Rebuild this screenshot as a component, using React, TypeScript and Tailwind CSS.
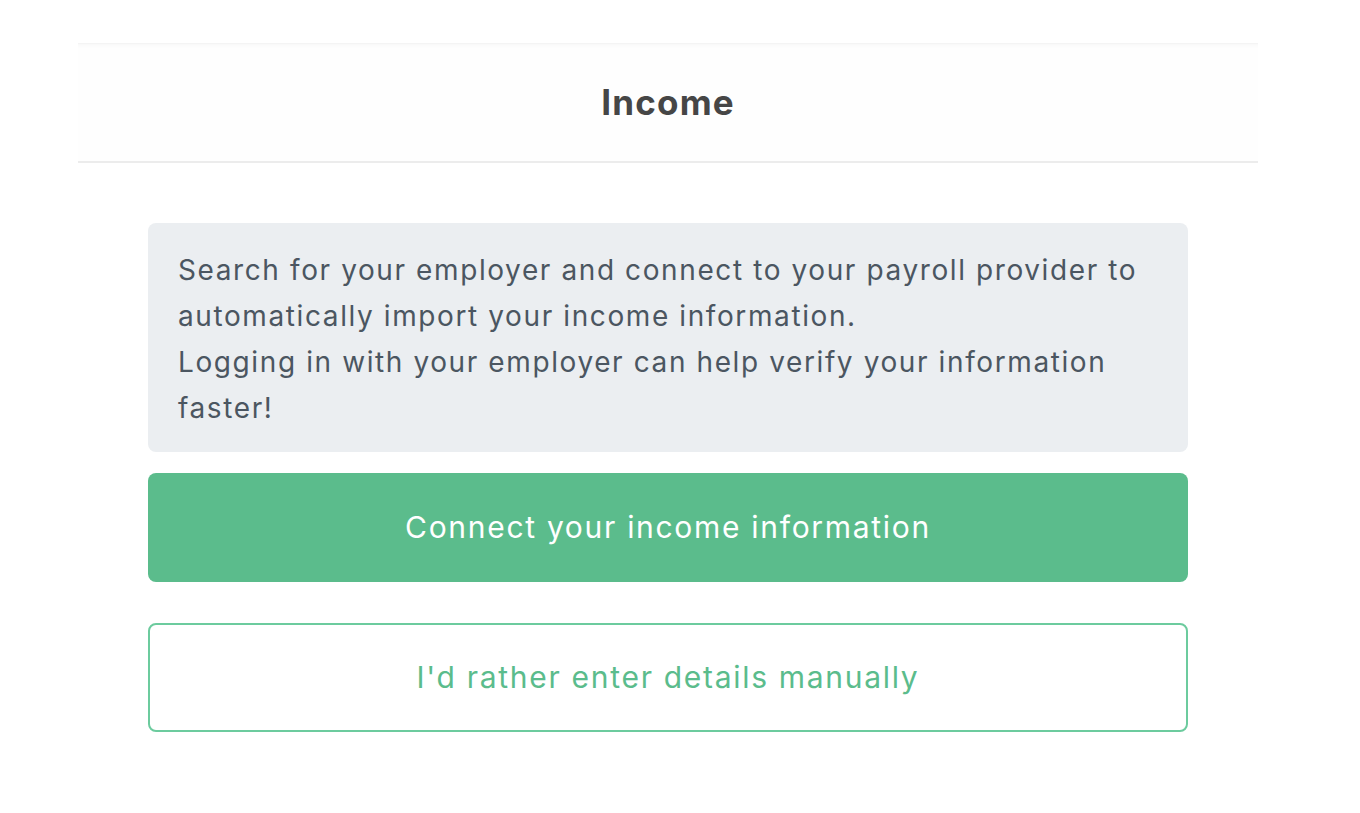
import React from "react";

export default function App() {
  return (
    <div className="min-h-screen w-full bg-white pt-[43px] font-['Inter','Noto_Sans',sans-serif]">
      <div className="mx-[78px] w-[1180px]">
        {/* Header */}
        <div className="flex h-[120px] items-center justify-center border-t border-[#f4f4f4] border-b-2 border-b-[#ececec] bg-[#fefefe] shadow-[inset_0_4px_5px_-4px_rgba(0,0,0,0.05)]">
          <h1 className="text-[35px] font-bold tracking-[1.2px] text-[#464646]">Income</h1>
        </div>

        {/* Body */}
        <div className="mx-[70px] mt-[60px] flex flex-col">
          <div className="rounded-lg bg-[#ebeef1] px-[30px] pb-[21px] pt-[24px] text-[28px] leading-[46px] tracking-[1.6px] text-[#4b5661]">
            <p>Search for your employer and connect to your payroll provider to automatically import your income information.</p>
            <p>Logging in with your employer can help verify your information faster!</p>
          </div>

          <button className="mt-[21px] h-[109px] rounded-lg bg-[#5bbc8c] text-[30px] tracking-[1.7px] text-white">
            Connect your income information
          </button>

          <button className="mt-[41px] h-[109px] rounded-lg border-2 border-[#6ccb9e] bg-white text-[30px] tracking-[1.7px] text-[#5bbc8c]">
            I'd rather enter details manually
          </button>
        </div>
      </div>
    </div>
  );
}
